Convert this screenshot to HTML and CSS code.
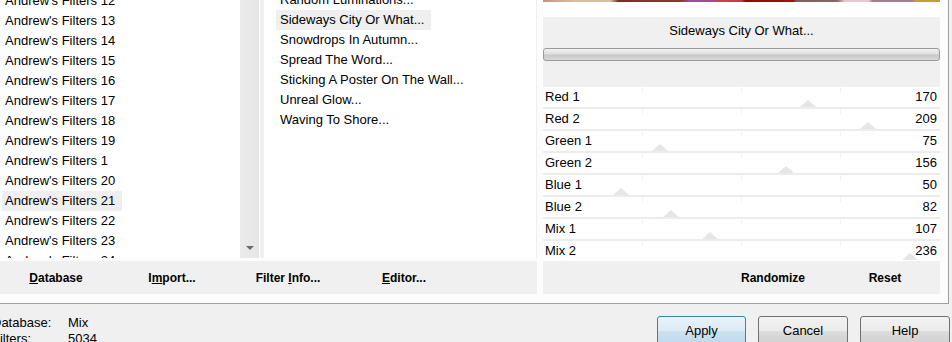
FILE: index.html
```html
<!DOCTYPE html>
<html lang="en">
<head>
    <meta charset="UTF-8">
    <title>Filters Unlimited</title>
    <link rel="stylesheet" href="styles.css">
</head>
<body>
    <div class="dialog">
        <div class="frame">
            <div class="lists">
                <div class="list categories">
                    <ul>
                        <li>Andrew's Filters 12</li>
                        <li>Andrew's Filters 13</li>
                        <li>Andrew's Filters 14</li>
                        <li>Andrew's Filters 15</li>
                        <li>Andrew's Filters 16</li>
                        <li>Andrew's Filters 17</li>
                        <li>Andrew's Filters 18</li>
                        <li>Andrew's Filters 19</li>
                        <li>Andrew's Filters 1</li>
                        <li>Andrew's Filters 20</li>
                        <li class="selected">Andrew's Filters 21</li>
                        <li>Andrew's Filters 22</li>
                        <li>Andrew's Filters 23</li>
                        <li>Andrew's Filters 24</li>
                    </ul>
                </div>
                <div class="scrollbar"><span class="arrow-down"></span></div>
                <div class="list filters">
                    <ul>
                        <li>Random Luminations...</li>
                        <li class="selected">Sideways City Or What...</li>
                        <li>Snowdrops In Autumn...</li>
                        <li>Spread The Word...</li>
                        <li>Sticking A Poster On The Wall...</li>
                        <li>Unreal Glow...</li>
                        <li>Waving To Shore...</li>
                    </ul>
                </div>
            </div>

            <div class="params">
                <div class="preview-edge"></div>
                <div class="title-box">
                    <div class="filter-title">Sideways City Or What...</div>
                    <div class="progress"></div>
                </div>
                <div class="sliders">
                    <div class="slider"><span class="name">Red 1</span><span class="value">170</span><span class="thumb" style="left: 66.67%"></span></div>
                    <div class="slider"><span class="name">Red 2</span><span class="value">209</span><span class="thumb" style="left: 81.96%"></span></div>
                    <div class="slider"><span class="name">Green 1</span><span class="value">75</span><span class="thumb" style="left: 29.41%"></span></div>
                    <div class="slider"><span class="name">Green 2</span><span class="value">156</span><span class="thumb" style="left: 61.18%"></span></div>
                    <div class="slider"><span class="name">Blue 1</span><span class="value">50</span><span class="thumb" style="left: 19.61%"></span></div>
                    <div class="slider"><span class="name">Blue 2</span><span class="value">82</span><span class="thumb" style="left: 32.16%"></span></div>
                    <div class="slider"><span class="name">Mix 1</span><span class="value">107</span><span class="thumb" style="left: 41.96%"></span></div>
                    <div class="slider"><span class="name">Mix 2</span><span class="value">236</span><span class="thumb" style="left: 92.55%"></span></div>
                </div>
            </div>

            <div class="strip tools">
                <span><u>D</u>atabase</span>
                <span>I<u>m</u>port...</span>
                <span>Filter <u>I</u>nfo...</span>
                <span><u>E</u>ditor...</span>
            </div>
            <div class="strip param-tools">
                <span></span>
                <span>Randomize</span>
                <span>Reset</span>
            </div>
        </div>

        <div class="footer">
            <div class="info">
                <span>Database:</span><span>Mix</span>
                <span>Filters:</span><span>5034</span>
            </div>
            <div class="buttons">
                <button class="btn default">Apply</button>
                <button class="btn">Cancel</button>
                <button class="btn">Help</button>
            </div>
        </div>
    </div>
</body>
</html>
```

FILE: styles.css
```css
body {
    margin: 0;
    padding: 0;
    background: #f0f0f0;
    font-family: 'Liberation Sans', Arial, sans-serif;
    font-size: 13px;
    color: #000;
    overflow: hidden;
}
.dialog {
    width: 952px;
    height: 342px;
    overflow: hidden;
}
.frame {
    display: grid;
    grid-template-columns: 537px 397px;
    grid-template-rows: 261px 33px;
    column-gap: 6px;
    padding: 0 8px 9px 0;
    width: 940px;
    background: #fcfcfc;
    border-right: 1px solid #a0a0a0;
    border-bottom: 1px solid #a0a0a0;
}
.lists {
    display: flex;
    height: 258px;
    background: #f0f0f0;
}
.list {
    background: white;
    overflow: hidden;
}
.list ul {
    list-style: none;
    margin: 0;
    padding: 0;
}
.list li {
    display: table;
    height: 20px;
    line-height: 20px;
    padding: 0 7px 0 3px;
    white-space: nowrap;
}
.list li.selected {
    background: #efefef;
}
.categories {
    width: 240px;
}
.categories ul {
    margin-top: -9px;
    padding-left: 2px;
}
.filters {
    width: 272px;
    margin-left: 4px;
}
.filters ul {
    margin-top: -10px;
    padding-left: 12px;
}
.filters li {
    padding-left: 4px;
}
.scrollbar {
    width: 20px;
    background: linear-gradient(to right, #ebebeb, #e6e6e6);
    border-right: 1px solid #fff;
    display: flex;
    align-items: flex-end;
    justify-content: center;
    padding-bottom: 8px;
    box-sizing: border-box;
}
.arrow-down {
    width: 0;
    height: 0;
    border-left: 4px solid transparent;
    border-right: 4px solid transparent;
    border-top: 4px solid #6a6a6a;
}
.params {
    display: flex;
    flex-direction: column;
    background: white;
}
.preview-edge {
    height: 2px;
    background: linear-gradient(to right, #c89088 0%, #d8c0a0 8%, #d6bca0 17%, #7a3028 19%, #8a3a30 35%, #a050a0 37%, #a04898 43%, #d04050 44%, #c83848 50%, #900808 51%, #a01010 63%, #806060 64%, #806868 74%, #e8c8d0 76%, #e8c8d0 82%, #a08090 83%, #a08090 93%, #c0a030 94%, #c0a030 100%);
}
.title-box {
    margin-top: 15px;
    height: 70px;
    background: #f0f0f0;
    padding-top: 4px;
    box-sizing: border-box;
}
.filter-title {
    text-align: center;
    line-height: 20px;
}
.progress {
    margin-top: 7px;
    height: 13px;
    box-sizing: border-box;
    border: 1px solid #9a9a9a;
    border-radius: 3px;
    background: linear-gradient(#f2f2f2, #dedede 45%, #cacaca 55%, #d8d8d8);
}
.sliders {
    display: flex;
    flex-direction: column;
}
.slider {
    position: relative;
    display: flex;
    justify-content: space-between;
    height: 20px;
    line-height: 20px;
    padding: 0 3px 0 2px;
    border-bottom: 2px solid #ececec;
    background:
        linear-gradient(#f3f3f3, #f3f3f3) 25% 0 / 1px 5px no-repeat,
        linear-gradient(#f3f3f3, #f3f3f3) 50% 0 / 1px 5px no-repeat,
        linear-gradient(#f3f3f3, #f3f3f3) 75% 0 / 1px 5px no-repeat,
        white;
}
.slider:last-child {
    height: 19px;
    line-height: 19px;
    border-bottom: none;
}
.thumb {
    position: absolute;
    bottom: 0;
    width: 0;
    height: 0;
    transform: translateX(-50%);
    border-left: 8px solid transparent;
    border-right: 8px solid transparent;
    border-bottom: 7px solid #e6e6e6;
}
.strip {
    display: grid;
    align-items: center;
    justify-items: center;
    background: #f0f0f0;
    font-size: 12px;
    font-weight: bold;
}
.tools {
    grid-template-columns: repeat(4, 116px);
    justify-content: start;
    margin-left: -2px;
}
.param-tools {
    grid-template-columns: 1fr 114px 110px;
}
.footer {
    display: flex;
    justify-content: space-between;
}
.info {
    display: grid;
    grid-template-columns: 76px auto;
    line-height: 16px;
    margin-left: -8px;
    padding-top: 11px;
}
.buttons {
    display: flex;
    gap: 12px;
    padding: 12px 2px 0 0;
}
.btn {
    width: 90px;
    height: 30px;
    font-family: 'Liberation Sans', Arial, sans-serif;
    font-size: 13px;
    color: #000;
    border: 1px solid #707070;
    border-radius: 3px;
    background: linear-gradient(#f2f2f2, #ebebeb 50%, #dddddd 50%, #cfcfcf);
    padding: 0 0 1px;
}
.btn.default {
    width: 89px;
    border-color: #3c7fb1;
    background: linear-gradient(#e9f3fa, #dcebf5 50%, #cde2f0 50%, #bdd8ea);
}
```
